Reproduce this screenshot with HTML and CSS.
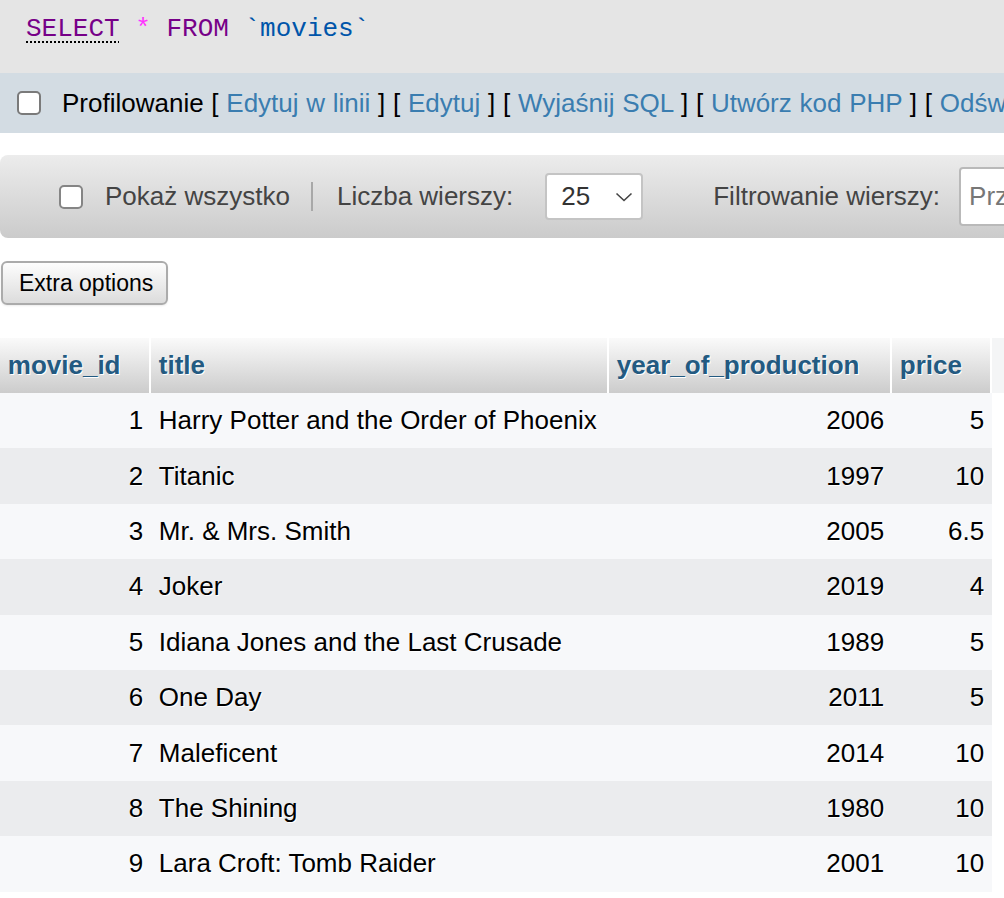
FILE: index.html
```html
<!DOCTYPE html>
<html lang="pl">
<head>
<meta charset="utf-8">
<title>movies</title>
<link rel="stylesheet" href="styles.css">
</head>
<body>
<div class="sql">
  <code><span class="kw doc">SELECT</span> <span class="op">*</span> <span class="kw">FROM</span> <span class="var">`movies`</span></code>
</div>

<div class="profiling">
  <input type="checkbox" class="cb">
  <span class="plinks">Profilowanie [ <a href="#">Edytuj w linii</a> ] [ <a href="#">Edytuj</a> ] [ <a href="#">Wyjaśnij SQL</a> ] [ <a href="#">Utwórz kod PHP</a> ] [ <a href="#">Odśwież</a> ]</span>
</div>

<div class="navbar">
  <input type="checkbox" class="cb">
  <span class="navlabel">Pokaż wszystko</span>
  <span class="sep"></span>
  <span class="navlabel">Liczba wierszy:</span>
  <div class="select">
    <span>25</span>
    <svg width="18" height="10" viewBox="0 0 18 10"><path d="M1.5 1.5 L9 8.5 L16.5 1.5" fill="none" stroke="#444" stroke-width="1.6"/></svg>
  </div>
  <span class="navlabel filter">Filtrowanie wierszy:</span>
  <input type="text" class="search" placeholder="Przeszukaj tę tabelę">
</div>

<button class="extra-btn">Extra options</button>

<div class="table-wrap">
  <table class="data">
    <thead>
      <tr>
        <th class="c-id">movie_id</th>
        <th class="c-title">title</th>
        <th class="c-year">year_of_production</th>
        <th class="c-price">price</th>
        <th class="c-more"></th>
      </tr>
    </thead>
    <tbody>
      <tr class="odd"><td class="num">1</td><td>Harry Potter and the Order of Phoenix</td><td class="num">2006</td><td class="num">5</td><td class="blank"></td></tr>
      <tr class="even"><td class="num">2</td><td>Titanic</td><td class="num">1997</td><td class="num">10</td><td class="blank"></td></tr>
      <tr class="odd"><td class="num">3</td><td>Mr. &amp; Mrs. Smith</td><td class="num">2005</td><td class="num">6.5</td><td class="blank"></td></tr>
      <tr class="even"><td class="num">4</td><td>Joker</td><td class="num">2019</td><td class="num">4</td><td class="blank"></td></tr>
      <tr class="odd"><td class="num">5</td><td>Idiana Jones and the Last Crusade</td><td class="num">1989</td><td class="num">5</td><td class="blank"></td></tr>
      <tr class="even"><td class="num">6</td><td>One Day</td><td class="num">2011</td><td class="num">5</td><td class="blank"></td></tr>
      <tr class="odd"><td class="num">7</td><td>Maleficent</td><td class="num">2014</td><td class="num">10</td><td class="blank"></td></tr>
      <tr class="even"><td class="num">8</td><td>The Shining</td><td class="num">1980</td><td class="num">10</td><td class="blank"></td></tr>
      <tr class="odd"><td class="num">9</td><td>Lara Croft: Tomb Raider</td><td class="num">2001</td><td class="num">10</td><td class="blank"></td></tr>
    </tbody>
  </table>
</div>
</body>
</html>
```

FILE: styles.css
```css
html, body {
  margin: 0;
  padding: 0;
  overflow: hidden;
  background: #fff;
}

body {
  font-family: "Liberation Sans", Arial, Helvetica, sans-serif;
  font-size: 26px;
  color: #000;
  width: 1004px;
}

.sql {
  height: 73px;
  box-sizing: border-box;
  background: #e5e5e5;
  padding: 12px 0 0 26px;
  white-space: nowrap;
}

.sql code {
  font-family: "Liberation Mono", "Courier New", monospace;
  font-size: 26px;
}

.kw { color: #770088; }
.doc {
  text-decoration: underline dotted #000 2px;
  text-underline-offset: 5px;
}
.op { color: #f3f; }
.var { color: #0055aa; }

.profiling {
  height: 60px;
  background: #d3dce3;
  display: flex;
  align-items: center;
  padding-left: 17px;
  white-space: nowrap;
  overflow: hidden;
}

.cb {
  appearance: none;
  -webkit-appearance: none;
  width: 24px;
  height: 24px;
  margin: 0;
  border: 2px solid #7a7a7a;
  border-radius: 5px;
  background: #fff;
  flex: none;
}

.plinks {
  margin-left: 21px;
  color: #000;
  word-spacing: 0.5px;
}

.plinks a {
  color: #3a7db0;
  text-decoration: none;
}

.navbar {
  margin-top: 22px;
  height: 83px;
  box-sizing: border-box;
  border-radius: 8px 0 0 8px;
  background: linear-gradient(to bottom, #ececec, #cbcbcb);
  display: flex;
  align-items: center;
  padding-left: 59px;
  white-space: nowrap;
  overflow: hidden;
}

.navbar .cb {
  border-color: #858585;
}

.navlabel {
  color: #444;
  margin-left: 22px;
}

.sep {
  width: 2px;
  height: 29px;
  background: #a8a8a8;
  margin-left: 21px;
  flex: none;
}

.sep + .navlabel {
  margin-left: 24px;
}

.select {
  margin-left: 32px;
  width: 98px;
  height: 47px;
  box-sizing: border-box;
  border: 2px solid #c4c4c4;
  border-radius: 4px;
  background: #fff;
  display: flex;
  align-items: center;
  justify-content: space-between;
  padding: 0 8px 0 14px;
  color: #333;
  flex: none;
}

.navlabel.filter {
  margin-left: 70px;
}

.search {
  margin-left: 19px;
  width: 300px;
  height: 59px;
  box-sizing: border-box;
  border: 2px solid #b9b9b9;
  border-radius: 4px;
  background: #fff;
  font-family: inherit;
  font-size: 26px;
  padding: 0 8px;
  flex: none;
}

.search::placeholder {
  color: #777;
}

.extra-btn {
  display: block;
  margin: 23px 0 0 1px;
  width: 167px;
  height: 44px;
  box-sizing: border-box;
  border: 2px solid #ababab;
  border-radius: 6px;
  background: linear-gradient(to bottom, #fdfdfd, #dcdcdc);
  box-shadow: 0 1px 2px rgba(0,0,0,0.08);
  font-family: inherit;
  font-size: 23px;
  color: #000;
  padding: 0 0 0 16px;
  text-align: left;
}

.table-wrap {
  margin-top: 33px;
  width: 1004px;
  overflow: hidden;
}

.data {
  border-collapse: separate;
  border-spacing: 0;
  table-layout: fixed;
  width: 1052px;
}

.data th {
  height: 55px;
  box-sizing: border-box;
  padding: 0 7.8px;
  text-align: left;
  vertical-align: middle;
  font-weight: bold;
  font-size: 26px;
  color: #235a81;
  text-shadow: 1px 1px 0 #fff;
  background: linear-gradient(to bottom, #fafafa, #cccccc);
  border-right: 2px solid #fff;
  white-space: nowrap;
}

.data th.c-id { width: 151px; }
.data th.c-title { width: 458px; }
.data th.c-year { width: 283px; }
.data th.c-price { width: 100px; }
.data th.c-more {
  width: 60px;
  background: #f4f5f6;
  border-right: none;
}

.data td {
  height: 55.4px;
  box-sizing: border-box;
  padding: 0 7.8px;
  vertical-align: middle;
  white-space: nowrap;
  text-shadow: 1px 1px 0 #fff;
}

.data tr.odd td { background: #f7f8fa; }
.data tr.even td { background: #ebecee; }
.data tr td.blank { background: #fff; }

.data td.num {
  text-align: right;
}
```
